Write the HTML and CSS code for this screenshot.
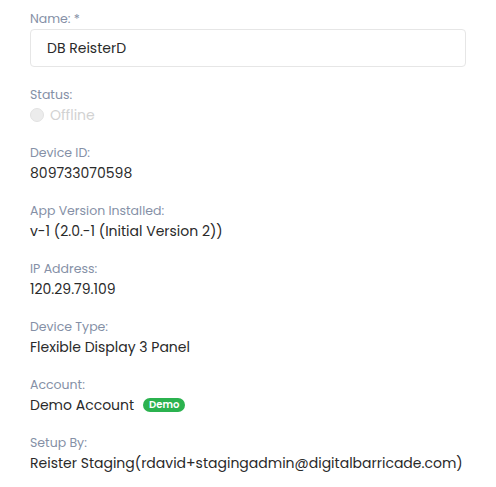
FILE: index.html
```html
<!DOCTYPE html>
<html>
<head>
<meta charset="utf-8">
<link rel="stylesheet" href="styles.css">
</head>
<body>
<div class="form">
  <div class="field field-name">
    <div class="label">Name: *</div>
    <div class="input">DB ReisterD</div>
  </div>
  <div class="field">
    <div class="label">Status:</div>
    <div class="value status"><span class="radio"></span><span class="offline">Offline</span></div>
  </div>
  <div class="field">
    <div class="label">Device ID:</div>
    <div class="value">809733070598</div>
  </div>
  <div class="field">
    <div class="label">App Version Installed:</div>
    <div class="value">v-1 (2.0.-1 (Initial Version 2))</div>
  </div>
  <div class="field">
    <div class="label">IP Address:</div>
    <div class="value">120.29.79.109</div>
  </div>
  <div class="field">
    <div class="label">Device Type:</div>
    <div class="value">Flexible Display 3 Panel</div>
  </div>
  <div class="field">
    <div class="label">Account:</div>
    <div class="value account">Demo Account <span class="badge">Demo</span></div>
  </div>
  <div class="field">
    <div class="label">Setup By:</div>
    <div class="value">Reister Staging(rdavid+stagingadmin@digitalbarricade.com)</div>
  </div>
</div>
</body>
</html>
```
FILE: styles.css
```css
html, body {
  margin: 0;
  padding: 0;
  background: #ffffff;
}
body {
  font-family: "Poppins", "Open Sans", "Noto Sans", sans-serif;
}
.form {
  display: flex;
  flex-direction: column;
  gap: 18px;
  padding: 9px 30px 0 30px;
}
.field {
  display: flex;
  flex-direction: column;
}
.label {
  font-size: 12.5px;
  line-height: 20px;
  color: #8590a6;
}
.value {
  font-size: 14px;
  line-height: 20px;
  color: #2a2a2a;
  white-space: nowrap;
}
.input {
  height: 36px;
  border: 1px solid #e6e6e6;
  border-radius: 4px;
  padding: 0 16px;
  display: flex;
  align-items: center;
  font-size: 14px;
  color: #2a2a2a;
}
.status {
  display: flex;
  align-items: center;
  gap: 6px;
}
.radio {
  width: 12px;
  height: 12px;
  border-radius: 50%;
  background: #ececec;
  border: 1px solid #e2e2e2;
}
.offline {
  color: #d2d2d2;
}
.account {
  display: flex;
  align-items: center;
  gap: 9px;
}
.badge {
  display: inline-flex;
  align-items: center;
  justify-content: center;
  height: 14px;
  padding: 0 6px;
  border-radius: 7px;
  background: #2bb24f;
  color: #ffffff;
  font-size: 10px;
  font-weight: 600;
  line-height: 14px;
}
```
